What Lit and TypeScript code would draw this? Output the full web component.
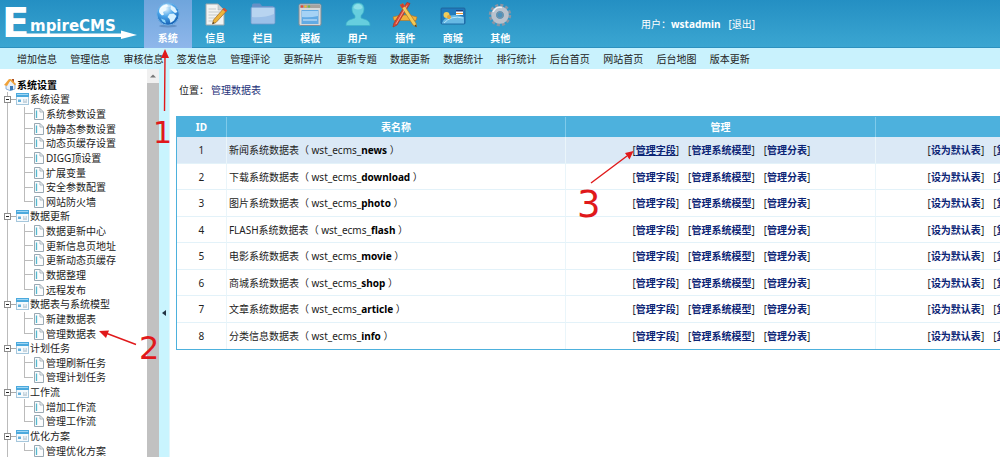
import { LitElement, html, svg, css } from "lit";
import { customElement, state } from "lit/decorators.js";
import { classMap } from "lit/directives/class-map.js";

const icons: Record<string, unknown> = {
  globe: svg`
    <defs><radialGradient id="g" cx=".4" cy=".25" r=".8"><stop offset="0" stop-color="#eaf8ff"/><stop offset=".45" stop-color="#4aa5ea"/><stop offset="1" stop-color="#0c55ab"/></radialGradient></defs>
    <ellipse cx="13" cy="25" rx="9" ry="1.5" fill="#4673a8" opacity=".5"/>
    <circle cx="13" cy="13" r="11.2" fill="url(#g)" stroke="#6fb0e6"/>
    <path d="M4 10C5 6 8 3.500 12 3.200L13 5 10.500 7 11.500 9 8 11 9 13.500 7 14.500 4.500 12Z" fill="#eefaff"/>
    <path d="M16 4.500L20 7 22.500 11 20 12 17.500 10 15.500 8Z" fill="#e1f5ff"/>
    <path d="M14.500 13L18.500 12.500 21.500 15 19 19.500 15.500 22 14.500 18 12.500 16Z" fill="#d5f1ff"/>
    <path d="M6 17.500L10 19 11 22.500 7.500 20.500Z" fill="#8dd5fa"/>
    <path d="M4 8Q13 -1 22 8Q13 4 4 8Z" fill="#fff" opacity=".4"/>`,
  note: svg`
    <path d="M4 3H16L22 9V24H4Z" fill="#f2f3f2" stroke="#9da8ac"/>
    <path d="M16 3L22 9H16Z" fill="#cbd0d2" stroke="#a5afb2" stroke-width=".5"/>
    <path d="M6.500 8H14M6.500 11H18M6.500 14H16M6.500 17H13M6.500 20H11" stroke="#c4c9ca"/>
    <path d="M22 7L25 9.500 14 21.500 10.500 23 11.500 19Z" fill="#eeb43b" stroke="#9a6622" stroke-width=".7"/>
    <path d="M22 7L25 9.500 23.500 11 20.700 8.500Z" fill="#d64b3b"/><path d="M10.500 23L11 21 12.500 22Z" fill="#333"/>`,
  folder: svg`
    <path d="M2 4Q2 2.500 3.500 2.500H10L12 5H23V21H3Z" fill="#668fc5"/>
    <rect x="1" y="6" width="24" height="17" rx="1.500" fill="#9cc0e8" stroke="#6e98c9" stroke-width=".8"/>
    <path d="M2 7H24V13Q14 17 2 16Z" fill="#c8def5" opacity=".65"/>`,
  window: svg`
    <rect x="2" y="3" width="22" height="21.500" rx="1.500" fill="#d6d8da" stroke="#848c94"/>
    <path d="M3 4H23V7H3Z" fill="#a5a29f"/><circle cx="5" cy="5.500" r="1.200" fill="#e44b3a"/><circle cx="8.500" cy="5.500" r="1.200" fill="#edbd31"/><circle cx="12" cy="5.500" r="1.200" fill="#72b74a"/>
    <rect x="4.500" y="9" width="17" height="14" fill="#61aae4"/><path d="M5 10H21V15Q13 17 5 16Z" fill="#a5d2f5"/>
    <path d="M6 19H20" stroke="#d4eaff"/>`,
  user: svg`
    <path d="M7 8C7 4 9.500 2 13 2S19 4 19 8C19 11 17.500 13.500 16 14.500V17C19 18.500 25 18.500 25 24.500H1C1 18.500 7 18.500 10 17V14.500C8.500 13.500 7 11 7 8Z" fill="#66cede" stroke="#3fb4c9" stroke-width=".7"/>
    <path d="M8.500 7C9 4 11 3 13 3S17 4 17.500 7Q13 10 8.500 7Z" fill="#a8ebef" opacity=".6"/>`,
  tools: svg`
    <path d="M1 16Q13 12 25 16L24 19.500H2Z" fill="#f1b13c" stroke="#b87320" stroke-width=".6"/>
    <path d="M15 1.500L18 2.500 5 24 1 26 2 22Z" fill="#dc4a36" stroke="#a73422" stroke-width=".7"/>
    <path d="M8 4L11 2.500 24 22 24.500 26 21 24Z" fill="#f5c953" stroke="#a87625" stroke-width=".7"/>
    <path d="M8 4L11 2.500 13 5.500 10 7.200Z" fill="#cd3e34"/><path d="M15 4.500L4 23" stroke="#ffb199" stroke-width=".8"/>
    <path d="M24 23.500L24.500 26 22.500 25Z" fill="#333"/>`,
  card: svg`
    <rect x="1" y="7" width="24" height="16" rx="1" fill="#207abd" stroke="#1e5d96" stroke-width=".8"/>
    <path d="M2 22Q8 10 24 16V22.500H2Z" fill="#67b9e4"/><path d="M4 22Q11 14 23 17" stroke="#b7e6fa" fill="none"/>
    <circle cx="6.500" cy="14" r="3" fill="#f0cc5b"/><circle cx="9" cy="16" r="2" fill="#e1a63a"/>
    <rect x="16" y="9" width="7" height="5" fill="#fff"/><path d="M16 12H23V13H16Z" fill="#f09a35"/><path d="M16 9H23V10.500H16Z" fill="#213f7e"/>`,
  gear: svg`
    <circle cx="13" cy="14" r="9.700" fill="none" stroke="#8995a5" stroke-width="3" stroke-dasharray="3 2.080"/>
    <circle cx="13" cy="14" r="6.300" fill="none" stroke="#bac2cd" stroke-width="5"/>
    <circle cx="13" cy="14" r="3.200" fill="#4d92bd" stroke="#8390a0"/>
    <path d="M6 11Q9 5 15 6.500" fill="none" stroke="#edf0f4" stroke-width="1.500"/>`,
};

const modules = [
  ["系统", "globe"], ["信息", "note"], ["栏目", "folder"], ["模板", "window"],
  ["用户", "user"], ["插件", "tools"], ["商城", "card"], ["其他", "gear"],
];

const shortcuts = ["增加信息", "管理信息", "审核信息", "签发信息", "管理评论", "更新碎片", "更新专题",
  "数据更新", "数据统计", "排行统计", "后台首页", "网站首页", "后台地图", "版本更新"];

const groups = [
  { name: "系统设置", items: ["系统参数设置", "伪静态参数设置", "动态页缓存设置", "DIGG顶设置", "扩展变量", "安全参数配置", "网站防火墙"] },
  { name: "数据更新", items: ["数据更新中心", "更新信息页地址", "更新动态页缓存", "数据整理", "远程发布"] },
  { name: "数据表与系统模型", items: ["新建数据表", "管理数据表"] },
  { name: "计划任务", items: ["管理刷新任务", "管理计划任务"] },
  { name: "工作流", items: ["增加工作流", "管理工作流"] },
  { name: "优化方案", items: ["管理优化方案"] },
];

const tables = [
  ["新闻系统数据表", "news"], ["下载系统数据表", "download"], ["图片系统数据表", "photo"], ["FLASH系统数据表", "flash"],
  ["电影系统数据表", "movie"], ["商城系统数据表", "shop"], ["文章系统数据表", "article"], ["分类信息数据表", "info"],
];

const base = css`
  *, *::before { box-sizing: border-box; }
  a { color: inherit; text-decoration: none; }
  ul { list-style: none; margin: 0; padding: 0; }
  svg { display: block; flex: none; }
`;

@customElement("cms-header")
class CmsHeader extends LitElement {
  static styles = [base, css`
    :host { display: block; flex: none; }
    .top { display: flex; height: 48px; background: linear-gradient(#248fc3, #3ba6d1); border-bottom: 1px solid #2d91bf; color: #fff; }
    .logo { width: 144px; flex: none; }
    .modules { display: grid; grid-template-columns: repeat(8, 1fr); width: 380px; flex: none; }
    .module { display: flex; flex-direction: column; align-items: center; height: 48px; padding-top: 1px; font-weight: 700; line-height: 16px; gap: 2px; }
    .module.active { background: linear-gradient(#6fa5dc, #8fb7eb); }
    .account { display: flex; align-items: center; gap: 8px; margin-left: 117px; white-space: nowrap; }
    .shortcuts { display: grid; grid-template-columns: repeat(14, 1fr); width: 763px; height: 21px; padding-left: 17px; line-height: 22px; white-space: nowrap; }
    .bar { background: #c9f2fd; color: #222; }
    .logo text { fill: #fff; }
    .big { font: 700 40px "DejaVu Sans", sans-serif; }
    .rest { font: 700 15px "DejaVu Sans", sans-serif; }
  `];
  render() {
    return html`
      <header class="top">
        <a class="logo" href="#"><svg width="144" height="47" viewBox="0 0 144 47">
          <text class="big" x="2" y="37">E</text>
          <text class="rest" x="30" y="31">mpireCMS</text>
          <path d="M6 33.500H121V30.500L137 35 121 39V37H6Z" fill="#fff"/>
        </svg></a>
        <nav class="modules">
          ${modules.map(([name, icon], i) => html`
            <a href="#" class=${classMap({ module: true, active: i === 0 })}>
              <svg width="26" height="27" viewBox="0 0 26 27">${icons[icon]}</svg><span>${name}</span>
            </a>`)}
        </nav>
        <div class="account"><span>用户：<b>wstadmin</b></span><a href="#">[退出]</a></div>
      </header>
      <div class="bar"><nav class="shortcuts">${shortcuts.map((s) => html`<a href="#">${s}</a>`)}</nav></div>`;
  }
}

@customElement("cms-tree")
class CmsTree extends LitElement {
  @state() closed = new Set<number>();
  static styles = [base, css`
    :host { display: flex; flex: none; width: 159px; overflow: hidden; background: #fff; }
    .tree { flex: 1; min-width: 0; padding-top: 8px; white-space: nowrap; color: #222; }
    .root { display: flex; align-items: center; gap: 1px; height: 15px; padding-left: 4px; font-weight: 700; color: #000; }
    .rows { display: grid; grid-auto-rows: 1fr; min-height: 366px; }
    .group, .items { display: contents; }
    .row { display: flex; align-items: center; line-height: 14px; background: linear-gradient(#bbb, #bbb) 7px 0 / 1px 100% no-repeat; }
    .toggle { display: flex; align-items: center; margin: 0; padding: 0 0 0 4px; border: 0; background: none; }
    .dash { width: 5px; height: 1px; background: #aaa; }
    .label { margin-left: 1px; }
    .elbow { align-self: stretch; width: 9px; margin-left: 24px; margin-right: 1px;
      background: linear-gradient(#bbb, #bbb) 0 0 / 1px 100% no-repeat, linear-gradient(#bbb, #bbb) 0 50% / 100% 1px no-repeat; }
    .row.last .elbow { background-size: 1px 50%, 100% 1px; }
    .page { display: flex; align-items: center; gap: 2px; }
    .scroll { width: 12px; flex: none; background: #c1c1c1; }
    .up { display: grid; place-items: center; width: 12px; height: 14px; padding: 0; border: 0; background: #f0f0f0; }
  `];
  toggle(i: number) {
    const next = new Set(this.closed);
    next.has(i) ? next.delete(i) : next.add(i);
    this.closed = next;
  }
  render() {
    return html`
      <nav class="tree">
        <div class="root">
          <svg width="12" height="13" viewBox="0 0 12 13"><path d="M8 1H10V4H8Z" fill="#ad5029"/><path d="M2 6L7 2 11 6V11L6 12.500 2 11Z" fill="#e7f0fa" stroke="#6294c9" stroke-width=".7"/><path d="M0 7L5 1 7 1.500 3 8Z" fill="#f0a23a"/><path d="M5 1.500L7 1 12 6 11 7.500Z" fill="#f0a23a"/><path d="M6 8H9V12L6 12.500Z" fill="#3979b8"/></svg>
          系统设置
        </div>
        <ul class="rows">
          ${groups.map((g, i) => html`
            <li class="group">
              <div class="row">
                <button class="toggle" aria-label=${g.name} @click=${() => this.toggle(i)}>
                  <svg width="7" height="7" viewBox="0 0 7 7"><rect x=".5" y=".5" width="6" height="6" fill="#fff" stroke="#8c8c8c"/><path d="M2 3.500H5" stroke="#222"/></svg>
                  <span class="dash"></span>
                </button>
                <svg width="13" height="12" viewBox="0 0 13 12"><rect x=".5" y=".5" width="12" height="11" fill="#f5fafd" stroke="#a6c7dc"/><path d="M0 0H13V4H0Z" fill="#4ba9dd"/><path d="M1 1.500H12" stroke="#9fd6f4"/><path d="M2 6.500H5V9H2Z" fill="#65b0da"/><path d="M7 7H8.500M9.500 7H11M7 9H11" stroke="#9bb1c0"/></svg>
                <a class="label" href="#">${g.name}</a>
              </div>
              ${this.closed.has(i) ? "" : html`<ul class="items">
                ${g.items.map((name, n) => html`
                  <li class=${classMap({ row: true, last: n === g.items.length - 1 })}>
                    <span class="elbow"></span>
                    <a class="page" href="#">
                      <svg width="10" height="12" viewBox="0 0 10 12"><path d="M.5 .5H6L9.500 4V11.500H.5Z" fill="#fbfcfd" stroke="#9aa9b3"/><path d="M6 .5V4H9.500" fill="none" stroke="#a9b5bd"/><path d="M2.500 2.500V10" stroke="#55b8cf" stroke-width="1.300"/></svg>
                      ${name}
                    </a>
                  </li>`)}
              </ul>`}
            </li>`)}
        </ul>
      </nav>
      <div class="scroll"><button class="up" aria-label="up"><svg width="6" height="4" viewBox="0 0 6 4"><path d="M0 3.500L3 .5 6 3.500Z" fill="#777"/></svg></button></div>`;
  }
}

@customElement("cms-tables")
class CmsTables extends LitElement {
  static styles = [base, css`
    :host { display: block; flex: 1; min-width: 0; overflow: hidden; background: #fff; border-left: 1px solid #e3f6fc; padding: 12px 0 0 6px; }
    .crumb { display: flex; gap: 2px; padding-left: 3px; line-height: 18px; color: #222; }
    .crumb a { color: #1c2f78; }
    .list { width: calc(100% + 176px); height: 234px; margin-top: 17px; border-collapse: separate; border-spacing: 0; table-layout: fixed; border: 1px solid #4db1dd; color: #222; white-space: nowrap; }
    .id { width: 5%; } .name { width: 34%; } .manage { width: 31%; }
    th { height: 20px; padding: 0; background: #4db1dd; color: #fff; border-right: 1px solid #7fcaea; }
    td { height: 26px; padding: 1px 0 0 2px; border-right: 1px solid #eaf5fa; border-bottom: 1px solid #e3f2f9; }
    tr:last-child td { border-bottom: 0; }
    .hover td { background: #dbe9f6; }
    .num { text-align: center; padding: 1px 0 0; }
    .links { display: flex; justify-content: center; gap: 9px; }
    .ops .links { justify-content: flex-start; padding-left: 50px; }
    b { color: #000; }
    .links a { font-weight: 700; color: #0b2475; }
    .hover .first { text-decoration: underline; }
  `];
  render() {
    return html`
      <div class="crumb"><span>位置：</span><a href="#">管理数据表</a></div>
      <table class="list">
        <colgroup><col class="id"><col class="name"><col class="manage"><col></colgroup>
        <thead><tr><th>ID</th><th>表名称</th><th>管理</th><th></th></tr></thead>
        <tbody>
          ${tables.map(([title, key], i) => html`
            <tr class=${classMap({ hover: i === 0 })}>
              <td class="num">${i + 1}</td>
              <td>${title}（ wst_ecms_<b>${key}</b> ）</td>
              <td><div class="links"><span>[<a class="first" href="#">管理字段</a>]</span><span>[<a href="#">管理系统模型</a>]</span><span>[<a href="#">管理分表</a>]</span></div></td>
              <td class="ops"><div class="links"><span>[<a href="#">设为默认表</a>]</span><span>[<a href="#">复制</a>]</span></div></td>
            </tr>`)}
        </tbody>
      </table>`;
  }
}

@customElement("app-root")
class AppRoot extends LitElement {
  static styles = [base, css`
    :host { position: relative; display: flex; flex-direction: column; height: 100vh; overflow: hidden; font: 10px/14px "Noto Sans", "Noto Sans CJK SC", sans-serif; background: #fff; }
    .body { display: flex; flex: 1; min-height: 0; }
    .split { display: grid; place-items: center; flex: none; width: 10px; padding: 100px 0 0; border: 0; background: #c9f4fe; }
    .marks { position: absolute; left: 0; top: 0; pointer-events: none; fill: #e0191b; stroke: #e0191b; }
    .marks text { stroke: none; font-family: "DejaVu Sans", sans-serif; }
    .one { font-size: 30px; } .two { font-size: 32px; } .three { font-size: 37px; }
  `];
  render() {
    return html`
      <cms-header></cms-header>
      <div class="body">
        <cms-tree></cms-tree>
        <button class="split" aria-label="收起"><svg width="4" height="6" viewBox="0 0 4 6"><path d="M4 0V6L0 3Z" fill="#234"/></svg></button>
        <cms-tables></cms-tables>
      </div>
      <svg class="marks" width="1000" height="457" viewBox="0 0 1000 457">
        <path d="M164.500 111L165 56M136 344.500L107 333.500M591 183L627 156" fill="none" stroke-width="1.400"/>
        <path d="M165 49L169 58H161ZM99 331L109 330.500 106 338ZM633.500 151L629.500 159.500 625 153Z" stroke="none"/>
        <text class="one" x="153" y="143">1</text>
        <text class="two" x="139" y="359">2</text>
        <text class="three" x="577" y="217">3</text>
      </svg>`;
  }
}
